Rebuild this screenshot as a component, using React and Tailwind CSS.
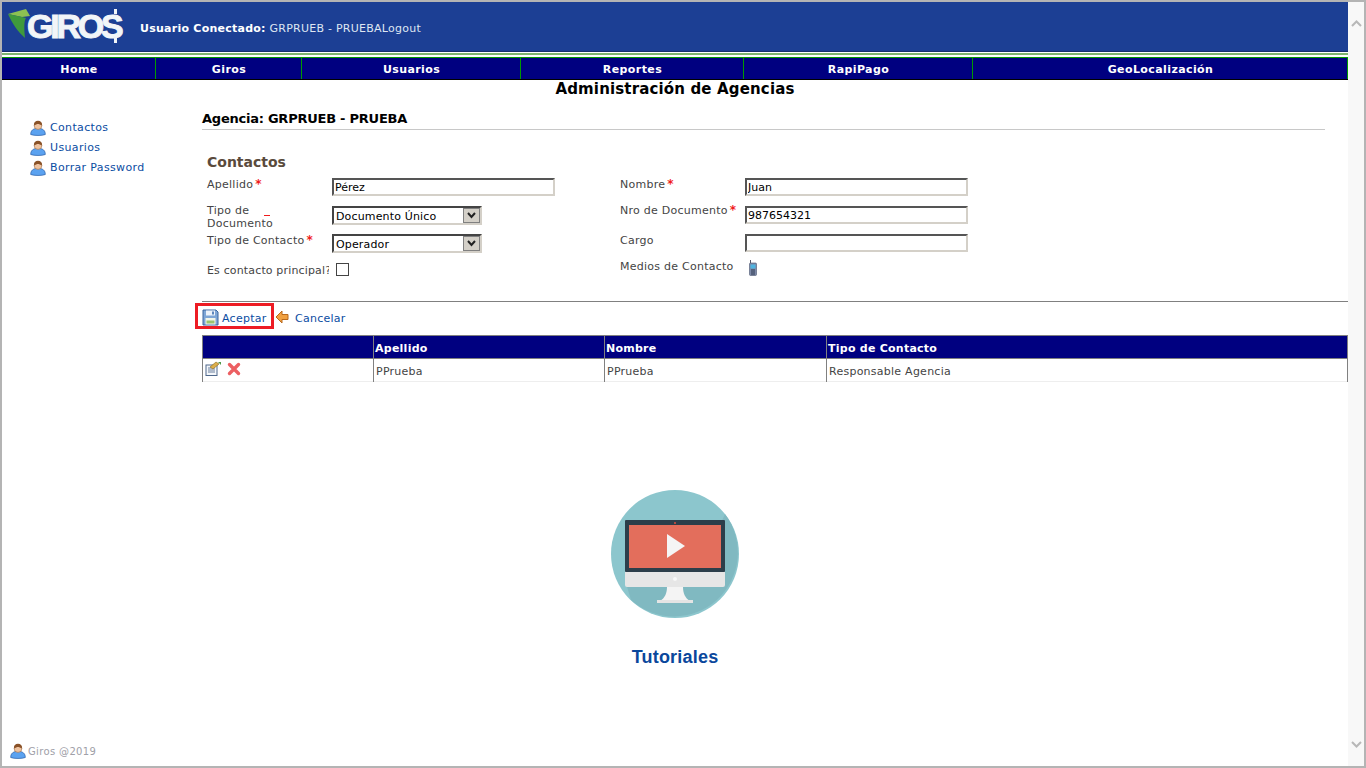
import React from 'react';

const NAV = [
  { label: 'Home', w: 'w-[154px]' },
  { label: 'Giros', w: 'w-[146px]' },
  { label: 'Usuarios', w: 'w-[219px]' },
  { label: 'Reportes', w: 'w-[223px]' },
  { label: 'RapiPago', w: 'w-[229px]' },
  { label: 'GeoLocalización', w: 'flex-1' },
];

const UserIcon = () => (
  <svg width="16" height="16" viewBox="0 0 16 16" className="shrink-0">
    <path d="M.7 14.500c0-2.800 1-4.500 3.300-5.500l1.500-.5h5l1.500.5c2.300 1 3.300 2.700 3.300 5.500-3 1.300-11.600 1.300-14.600 0z" fill="#5ba2f0" stroke="#2a5fa8" strokeWidth="0.7" />
    <circle cx="8" cy="5.500" r="3.900" fill="#efc3a0" stroke="#8a5a34" strokeWidth="0.5" />
    <path d="M4 5.500C3.700 2.300 5.500.8 8 .8s4.300 1.500 4 4.700C10.500 4.600 9 4 8 4s-2.500.6-4 1.500z" fill="#8a5228" />
  </svg>
);

const SaveIcon = () => (
  <svg width="17" height="17" viewBox="0 0 17 17" className="shrink-0">
    <path d="M1 1h13l2 2v13H1z" fill="#7fa6d6" stroke="#3b659e" />
    <rect x="4" y="1.500" width="9" height="5" fill="#eef3fa" />
    <rect x="10" y="2.500" width="2" height="3" fill="#5d86bd" />
    <rect x="3.500" y="9" width="10" height="6.500" fill="#f3f6ea" />
    <rect x="4.500" y="11.500" width="8" height="3" fill="#9cc46e" />
  </svg>
);

const BackIcon = () => (
  <svg width="14" height="14" viewBox="0 0 14 14" className="shrink-0">
    <path d="M7 1 1 7l6 6V9.500h6v-5H7z" fill="#f0a040" stroke="#b9691c" strokeLinejoin="round" />
  </svg>
);

const EditIcon = () => (
  <svg width="17" height="15" viewBox="0 0 17 15">
    <rect x="1" y="4" width="11" height="10.500" fill="#f4f7fb" stroke="#50698c" />
    <path d="M3 7h7M3 9h7M3 11h7" stroke="#6b7f9c" />
    <path d="M5 6l6-5 3 2-6 5z" fill="#dcae4a" stroke="#8c6a1e" strokeWidth="0.6" />
    <path d="M13 1h3v3z" fill="#4f9a4a" />
  </svg>
);

const DeleteIcon = () => (
  <svg width="14" height="14" viewBox="0 0 14 14">
    <path d="M2.500 2.500l9 9M11.500 2.500l-9 9" stroke="#ec5f62" strokeWidth="3.400" strokeLinecap="round" />
  </svg>
);

const PhoneIcon = () => (
  <svg width="8" height="16" viewBox="0 0 8 16">
    <path d="M1 0h1v3H1z" fill="#556" />
    <rect x="0.500" y="3" width="7" height="12.500" rx="1" fill="#7d8aa8" stroke="#4c5670" strokeWidth="0.6" />
    <rect x="1.500" y="4.500" width="5" height="4" fill="#4fb4e0" />
    <path d="M2 10h4M2 12h4M2 14h4" stroke="#2f3850" />
  </svg>
);

const Logo = () => (
  <div className="relative flex items-center w-[126px] h-[49px] shrink-0">
    <svg width="26" height="32" viewBox="0 0 26 32" className="absolute left-[5px] top-[5px]">
      <path d="M1 7 19 2l4 7-8 1z" fill="#8cc152" />
      <path d="M1 7l14 3 4 1c-2 3-2 9-1 20C11 25 5 16 1 7z" fill="#3f9a3c" />
    </svg>
    <span className="absolute left-[25px] top-[4px] font-['Liberation_Sans',sans-serif] font-bold text-[34px] leading-[40px] tracking-[-3.200px] text-[#f2f5f8] [-webkit-text-stroke:1px_#f2f5f8]">GIROS</span>
    <span className="absolute left-[112px] top-[7px] w-[3px] h-[5px] bg-[#f2f5f8]" />
    <span className="absolute left-[112px] top-[36px] w-[3px] h-[5px] bg-[#f2f5f8]" />
  </div>
);

const Label = ({ children, required, className = '' }) => (
  <label className={`text-[#444] leading-[13px] ${className}`}>
    {children}
    {required && <span className="ml-[2px] text-[12px] leading-none font-bold text-[#f01c1c]">*</span>}
  </label>
);

const inputCls = 'h-[18px] border-2 border-t-[#555] border-l-[#555] border-r-[#d4d0c8] border-b-[#d4d0c8] bg-white px-[1px] text-[11px] tracking-normal text-black outline-none';

const Select = ({ value, children }) => (
  <div className="relative w-[150px] h-[19px]">
    <select defaultValue={value} className="appearance-none w-full h-full border-2 border-t-[#444] border-l-[#444] border-r-[#d4d0c8] border-b-[#d4d0c8] bg-white px-[2px] pt-[1px] text-[11px] tracking-[0.15px] text-black outline-none">
      {children}
    </select>
    <span className="absolute right-[2px] top-[2px] w-[17px] h-[15px] bg-[#d4d0c8] border border-[#808080] flex items-center justify-center">
      <svg width="9" height="7" viewBox="0 0 9 7"><path d="M1 1l3.500 4L8 1" fill="none" stroke="#222" strokeWidth="2" /></svg>
    </span>
  </div>
);

export default function App() {
  return (
    <div className="h-screen w-full overflow-hidden flex border-2 border-[#b4b4b4] bg-white font-['DejaVu_Sans',Verdana,sans-serif] text-[11px] tracking-[0.25px]">
      <div className="flex-1 min-w-0 flex flex-col">
        {/* cabecera */}
        <header className="h-[49px] shrink-0 bg-[#1c3f94] flex items-center">
          <Logo />
          <div className="ml-[12px] pt-[6px] text-[11px] text-[#dfe6f2]">
            <b className="text-white">Usuario Conectado:</b> GRPRUEB - PRUEBALogout
          </div>
        </header>
        <div className="h-[1px] shrink-0 bg-[#16306e]" />
        <div className="h-[3px] shrink-0 bg-white flex items-end"><div className="h-[2px] w-full bg-[#80b56f]" /></div>

        <div className="h-[2px] shrink-0 bg-white" />
        <nav className="h-[23px] shrink-0 flex bg-[#000080] border-t border-b border-t-[#009a00] border-b-black">
          {NAV.map((n) => (
            <div key={n.label} className={`${n.w} flex items-center justify-center font-bold text-white text-[11px] tracking-[0.4px] pt-[3px] pl-[1px] border-r border-[#009a00]`}>
              {n.label}
            </div>
          ))}
        </nav>

        <h1 className="text-center font-bold text-[15px] tracking-[0.15px] leading-[18px] text-black">Administración de Agencias</h1>

        <div className="flex flex-1 min-h-0">
          <aside className="w-[200px] shrink-0 pl-[28px] pt-[22px] flex flex-col gap-[4px]">
            {['Contactos', 'Usuarios', 'Borrar Password'].map((t) => (
              <a key={t} className="h-[16px] flex items-center gap-[4px] text-[#0b4da2] tracking-[0.35px]">
                <UserIcon /> {t}
              </a>
            ))}
          </aside>

          <main className="flex-1 min-w-0 flex flex-col">
            <div className="mr-[23px] mt-[13px] h-[19px] border-b border-[#c8c8c8] font-bold text-[13px] tracking-[-0.24px] leading-[16px] text-black">Agencia: GRPRUEB - PRUEBA</div>

            <h2 className="ml-[5px] mt-[23px] font-bold text-[14px] tracking-normal leading-[18px] text-[#5a4a3c]">Contactos</h2>

            <div className="ml-[5px] mt-[7px] grid grid-cols-[125px_288px_125px_223px] auto-rows-[28px]">
              <Label required>Apellido</Label>
              <input className={`${inputCls} w-[223px]`} defaultValue="Pérez" />
              <Label required>Nombre</Label>
              <input className={`${inputCls} w-[223px]`} defaultValue="Juan" />

              <label className="relative -mt-[2px] text-[#444] leading-[13px]">
                Tipo de<br />Documento
                <span className="absolute left-[57px] top-[11px] w-[6px] h-[1px] bg-[#f01c1c]" />
              </label>
              <Select value="du"><option value="du">Documento Único</option></Select>
              <Label required className="-mt-[2px]">Nro de Documento</Label>
              <input className={`${inputCls} w-[223px]`} defaultValue="987654321" />

              <Label required>Tipo de Contacto</Label>
              <Select value="op"><option value="op">Operador</option></Select>
              <Label>Cargo</Label>
              <input className={`${inputCls} w-[223px]`} />

              <label className="pt-[2px] w-[122px] text-[#444] tracking-[0.15px] leading-[13px] overflow-hidden whitespace-nowrap">Es contacto principal?</label>
              <div className="flex items-start pt-[1px]"><span className="ml-[4px] w-[13px] h-[13px] border border-[#444] bg-white" /></div>
              <label className="text-[#444] leading-[13px] -mt-[2px]">Medios de Contacto</label>
              <div className="ml-[4px] -mt-[2px]"><PhoneIcon /></div>
            </div>

            <div className="mt-[11px] border-t border-[#808080]" />

            <div className="h-[33px] flex items-start text-[11px] text-[#0b4da2]">
              <span className="flex items-center gap-[3px] -ml-[7px] pl-[4px] pt-[2px] w-[79px] h-[26px] mt-[1px] border-[3px] border-[#ed1c24]">
                <SaveIcon /> <span className="mt-[4px] whitespace-nowrap">Aceptar</span>
              </span>
              <span className="ml-[1px] h-[26px] mt-[1px] pt-[2px] flex items-center gap-[6px]"><BackIcon /> <span className="mt-[4px]">Cancelar</span></span>
            </div>

            <table className="table-fixed w-[1146px] border-collapse text-[11px]">
              <colgroup>
                <col className="w-[171px]" />
                <col className="w-[231px]" />
                <col className="w-[222px]" />
                <col />
              </colgroup>
              <thead>
                <tr className="h-[23px] bg-[#000080] text-white font-bold text-left">
                  <th className="border border-[#808080] px-[2px]" />
                  <th className="border border-[#808080] px-[1px] pt-[5px]">Apellido</th>
                  <th className="border border-[#808080] px-[1px] pt-[5px]">Nombre</th>
                  <th className="border border-[#808080] px-[1px] pt-[5px]">Tipo de Contacto</th>
                </tr>
              </thead>
              <tbody>
                <tr className="h-[23px] text-[#444] border-b border-[#eeeeee]">
                  <td className="border-x border-[#808080] px-[2px]">
                    <div className="flex items-center gap-[5px] mb-[3px]"><EditIcon /><DeleteIcon /></div>
                  </td>
                  <td className="border-x border-[#808080] px-[2px] pt-[4px]">PPrueba</td>
                  <td className="border-x border-[#808080] px-[2px] pt-[4px]">PPrueba</td>
                  <td className="border-x border-[#808080] px-[2px] pt-[4px]">Responsable Agencia</td>
                </tr>
              </tbody>
            </table>
          </main>
        </div>

        {/* tutoriales */}
        <div className="flex flex-col items-center pb-[75px]">
          <svg width="128" height="128" viewBox="0 0 128 128">
            <circle cx="64" cy="64" r="64" fill="#8cc6cd" />
            <path d="M114 24a64 64 0 0 1-94 86l-6-20h70z" fill="#80b9c1" />
            <rect x="14" y="30" width="100" height="52" rx="1" fill="#2c3e4a" />
            <rect x="18" y="35" width="92" height="43" fill="#e36e5c" />
            <rect x="63" y="32" width="2" height="2" fill="#b04a40" />
            <path d="M56 44l18 12-18 12z" fill="#f5f5f5" />
            <path d="M14 82h100v13a2 2 0 0 1-2 2H16a2 2 0 0 1-2-2z" fill="#e6e6e6" />
            <circle cx="64" cy="89" r="2" fill="#f7f7f7" />
            <path d="M56 97h16c0 6 2 11 7 14H49c5-3 7-8 7-14z" fill="#f4f4f4" />
            <rect x="46" y="110" width="36" height="3" fill="#e4e4e4" />
          </svg>
          <div className="mt-[29px] font-['Liberation_Sans',Arial,sans-serif] font-bold text-[18px] tracking-[0.2px] leading-[20px] text-[#0a479c]">Tutoriales</div>
        </div>

        <footer className="h-[18px] shrink-0 mb-[6px] pl-[8px] flex items-center gap-[2px] text-[10px] text-[#a0a0a8] tracking-[0.35px]">
          <UserIcon /> Giros @2019
        </footer>
      </div>

      {/* barra de scroll */}
      <div className="w-[16px] shrink-0 bg-[#f8f8f8] flex flex-col justify-between items-center py-[18px]">
        <svg width="11" height="7" viewBox="0 0 11 7"><path d="M1 6l4.500-4.500L10 6" fill="none" stroke="#b8b8b8" strokeWidth="2" /></svg>
        <svg width="11" height="7" viewBox="0 0 11 7"><path d="M1 1l4.500 4.500L10 1" fill="none" stroke="#b8b8b8" strokeWidth="2" /></svg>
      </div>
    </div>
  );
}
